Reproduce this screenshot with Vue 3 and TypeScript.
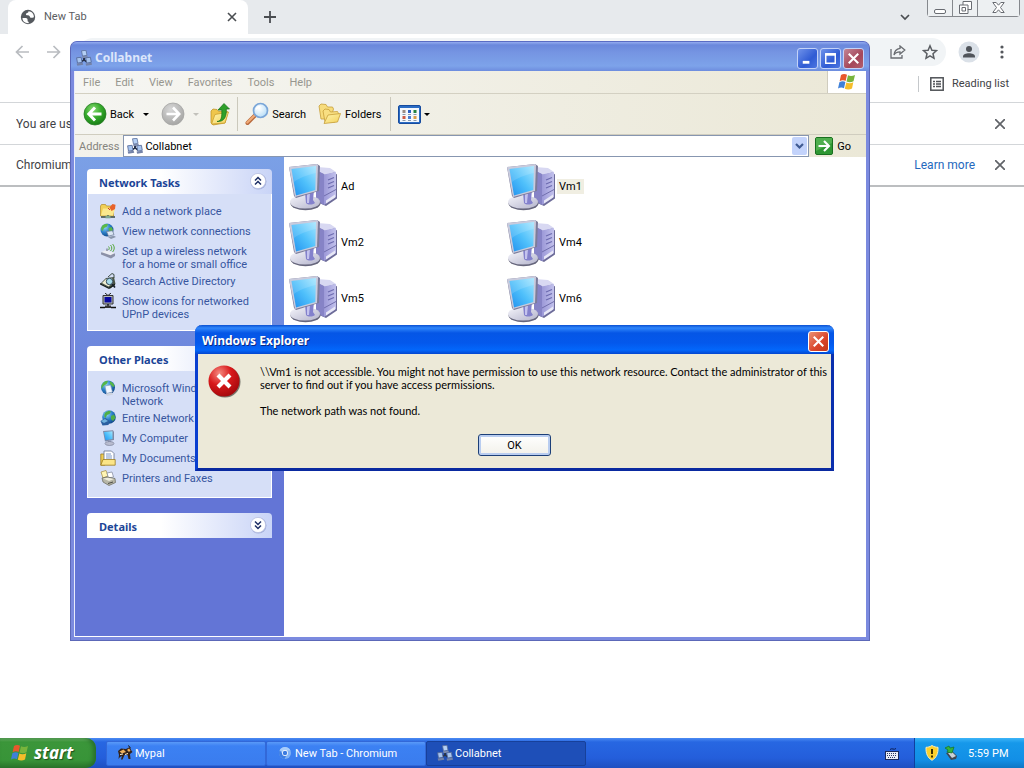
<script setup lang="ts">
interface TaskLink { label: string; icon: string }
interface Pane { title: string; open: boolean; links: TaskLink[] }

const menus: string[] = ['File', 'Edit', 'View', 'Favorites', 'Tools', 'Help']
const machines: string[] = ['Ad', 'Vm1', 'Vm2', 'Vm4', 'Vm5', 'Vm6']
const selected = 'Vm1'

const panes: Pane[] = [
  {
    title: 'Network Tasks',
    open: true,
    links: [
      { label: 'Add a network place', icon: 'addplace' },
      { label: 'View network connections', icon: 'connections' },
      { label: 'Set up a wireless network\nfor a home or small office', icon: 'wireless' },
      { label: 'Search Active Directory', icon: 'directory' },
      { label: 'Show icons for networked\nUPnP devices', icon: 'upnp' },
    ],
  },
  {
    title: 'Other Places',
    open: true,
    links: [
      { label: 'Microsoft Windows\nNetwork', icon: 'msnet' },
      { label: 'Entire Network', icon: 'globe' },
      { label: 'My Computer', icon: 'mycomputer' },
      { label: 'My Documents', icon: 'documents' },
      { label: 'Printers and Faxes', icon: 'printers' },
    ],
  },
  { title: 'Details', open: false, links: [] },
]

const tasks = [
  { label: 'Mypal', icon: 'mypal', active: false },
  { label: 'New Tab - Chromium', icon: 'chromium', active: false },
  { label: 'Collabnet', icon: 'workgroup', active: true },
]
</script>

<template>
  <div class="screen">
    <svg class="defs" aria-hidden="true">
      <defs>
        <linearGradient id="gScreen" x1="0" y1="1" x2="1" y2="0">
          <stop offset="0" stop-color="#1f8fee" /><stop offset=".5" stop-color="#4fc0fb" /><stop offset="1" stop-color="#a5e6ff" />
        </linearGradient>
        <linearGradient id="gTower" x1="0" y1="0" x2="1" y2="0">
          <stop offset="0" stop-color="#9c99d8" /><stop offset="1" stop-color="#c2c1ec" />
        </linearGradient>
        <linearGradient id="gBase" x1="0" y1="0" x2="1" y2="1">
          <stop offset="0" stop-color="#f4f4fa" /><stop offset="1" stop-color="#b4b4cc" />
        </linearGradient>
        <radialGradient id="gGreen" cx=".4" cy=".3" r=".75">
          <stop offset="0" stop-color="#8bdc76" /><stop offset=".5" stop-color="#36ab2c" /><stop offset="1" stop-color="#157a13" />
        </radialGradient>
        <radialGradient id="gGrey" cx=".4" cy=".3" r=".75">
          <stop offset="0" stop-color="#d8d8d8" /><stop offset="1" stop-color="#a3a3a1" />
        </radialGradient>
        <radialGradient id="gRed" cx=".35" cy=".25" r=".85">
          <stop offset="0" stop-color="#f58a80" /><stop offset=".45" stop-color="#d8191b" /><stop offset="1" stop-color="#9c0509" />
        </radialGradient>
        <linearGradient id="gFolder" x1="0" y1="0" x2="1" y2="1">
          <stop offset="0" stop-color="#fff5b0" /><stop offset="1" stop-color="#f3d059" />
        </linearGradient>
        <radialGradient id="gGlobe" cx=".35" cy=".3" r=".8">
          <stop offset="0" stop-color="#8fd4f7" /><stop offset=".5" stop-color="#2a7fc8" /><stop offset="1" stop-color="#0d3c7c" />
        </radialGradient>
        <radialGradient id="gLens" cx=".4" cy=".35" r=".7">
          <stop offset="0" stop-color="#ffffff" /><stop offset="1" stop-color="#b4dcf7" />
        </radialGradient>
      </defs>

      <symbol id="i-workgroup" viewBox="0 0 16 16">
        <path d="M8 6v4M8 9.500l-3 2.500M8 9.500l3 2.500" stroke="#26324a" stroke-width="2" fill="none" />
        <path d="M5.500.8l4.500-.5 1 5-4.500.8z" fill="#b5d0f5" stroke="#5b6f99" stroke-width=".8" />
        <path d="M6 6.300l5.500-.6.5 1.800-5.500.7z" fill="#7d8cb0" />
        <path d="M.6 7.800l4.500-.5 1 5-4.600.8z" fill="#a6c4ef" stroke="#506493" stroke-width=".8" />
        <path d="M.6 13.500l6-.8.7 2-6 1z" fill="#7382a8" />
        <path d="M9.700 7.800l4.700-.5.9 5-4.600.8z" fill="#a6c4ef" stroke="#506493" stroke-width=".8" />
        <path d="M9.600 13.500l6-.8.4 2-5.900 1z" fill="#7382a8" />
      </symbol>

      <symbol id="i-computer" viewBox="0 0 48 48">
        <path d="M28 5l14 1.500 6 5v24L37 43l-9-4z" fill="#6d6c98" />
        <path d="M28 4l13 1 6 4-11 3-8-4z" fill="#d8d8f2" />
        <path d="M27 7l8 4v31l-8-4z" fill="#8683c6" />
        <path d="M35 11.500l12-2.500v25l-12 8z" fill="url(#gTower)" />
        <path d="M39 17l6-2.500M39 21l6-2.500M39 25l6-2.500" stroke="#6d6bb0" stroke-width="1.300" />
        <path d="M37 37.500l9-6v3l-9 6z" fill="#e8e8f6" />
        <path d="M35 33l12-6.500" stroke="#716fae" />
        <ellipse cx="16.500" cy="40.500" rx="15" ry="6.800" fill="#66667c" />
        <ellipse cx="16" cy="39" rx="15" ry="6.600" fill="url(#gBase)" />
        <path d="M16 30l9-3-1 10 2 3c-3 2-7 2-9 0z" fill="#8381cc" />
        <path d="M18 31l3-1-1 10-2 0z" fill="#c4c3ee" />
        <path d="M0 4L28 1l3 2-1 25L7 35l-2-2z" fill="#7c7c9a" />
        <path d="M0 4L28 1l1 1-1 26L6 34z" fill="#c9cbdd" />
        <path d="M2.500 6L27 3l-.7 24L7 32.500z" fill="url(#gScreen)" />
        <path d="M2.500 6L27 3l-.2 7C18 12 10 15 5 19z" fill="#fff" opacity=".14" />
      </symbol>

      <symbol id="i-flag" viewBox="0 0 20 18">
        <path d="M4 2C6 .6 8.500.8 10 1.800L8.600 8C7 7 4.600 7 2.600 8.200z" fill="#e8582c" />
        <path d="M11 2.200c2 1.200 4.500 1 7-.2L16.500 8.200c-2.200 1.200-5 1.200-7 .2z" fill="#78b43c" />
        <path d="M2.400 9.200C4.400 8 6.800 8 8.400 9L7 15.200c-1.800-1-4-1-6 .2z" fill="#3f80d8" />
        <path d="M9.300 9.400c2 1 4.800 1 7-.2L15 15.600c-2.200 1.200-5 1.200-7.200.2z" fill="#f5bd2a" />
      </symbol>

      <symbol id="i-back" viewBox="0 0 24 24">
        <circle cx="12" cy="12" r="11" fill="url(#gGreen)" stroke="#2a7d27" stroke-width=".8" />
        <path d="M12 5.500L5.800 12l6.200 6.500M6.500 12H18.500" fill="none" stroke="#fff" stroke-width="3" />
      </symbol>
      <symbol id="i-forward" viewBox="0 0 24 24">
        <circle cx="12" cy="12" r="11" fill="url(#gGrey)" stroke="#a5a5a3" stroke-width=".8" />
        <path d="M12 5.500l6.200 6.500-6.200 6.500M17.500 12H5.500" fill="none" stroke="#fff" stroke-width="2.600" />
      </symbol>
      <symbol id="i-up" viewBox="0 0 20 24">
        <path d="M1 9l2-2 4 .5 1.500 1.800L16 9l2 1-3 11-12 2-2-2z" fill="#efc64c" stroke="#b98d20" stroke-width=".7" />
        <path d="M1.500 22L5 12.500 18.500 10 15 21z" fill="url(#gFolder)" stroke="#c79a26" stroke-width=".7" />
        <path d="M7 19.500c4.500-.5 5-4 4.800-11.500H8l6-6.500L19.500 7h-3.200c.4 8-2.300 13-9.300 12.500z" fill="#2fa02a" stroke="#16701a" stroke-width=".7" />
      </symbol>
      <symbol id="i-search" viewBox="0 0 24 24">
        <path d="M10 13.500L2.500 21" stroke="#b8693c" stroke-width="4" stroke-linecap="round" />
        <path d="M9.500 13.500L2.300 20.500" stroke="#f0ab78" stroke-width="2.200" stroke-linecap="round" />
        <circle cx="15.500" cy="8.500" r="7" fill="url(#gLens)" stroke="#7aa6d8" stroke-width="1.700" />
        <path d="M11 7.500c.8-2 2.500-3 4.500-3" stroke="#fff" stroke-width="1.500" fill="none" />
      </symbol>
      <symbol id="i-folders" viewBox="0 0 24 24">
        <path d="M1 4l2-2 5 .5L9.500 5l5 0 1 2-3 10H3z" fill="#f7dc7c" stroke="#c79e38" stroke-width=".8" />
        <path d="M5 9l2-2 4 .5L12.500 10l7-.5 1 2L17 20H7z" fill="#f8df82" stroke="#c79e38" stroke-width=".8" />
        <path d="M6 21.500L10 13l12.500-1.500L19.500 20z" fill="url(#gFolder)" stroke="#c79e38" stroke-width=".8" />
      </symbol>
      <symbol id="i-views" viewBox="0 0 23 19">
        <rect x=".5" y=".5" width="22" height="18" rx="1.500" fill="#2b6cc4" stroke="#164b9e" />
        <rect x="2" y="3" width="19" height="14" fill="#f4f8fd" />
        <path d="M4.500 5h3v3h-3z" fill="#9b8d86" /><path d="M10 5h3v3h-3z" fill="#2c5fc4" /><path d="M15.500 5h3v3h-3z" fill="#258341" />
        <path d="M4.500 11h3v3h-3z" fill="#ce5b44" /><path d="M10 11h3v3h-3z" fill="#4b7dcf" /><path d="M15.500 11h3v3h-3z" fill="#d99d46" />
        <path d="M4.500 9.500h3M10 9.500h3M15.500 9.500h3M4.500 15.500h3M10 15.500h3M15.500 15.500h3" stroke="#8899ab" />
      </symbol>
      <symbol id="i-go" viewBox="0 0 18 18">
        <rect x=".5" y=".5" width="17" height="17" rx="1.500" fill="#2f9733" stroke="#19701f" />
        <path d="M1 1h16v5L1 14z" fill="#6fc66a" opacity=".5" />
        <path d="M9 4l5 5-5 5M14 9H3.500" fill="none" stroke="#fff" stroke-width="2.100" />
      </symbol>

      <symbol id="i-addplace" viewBox="0 0 16 16">
        <path d="M.5 3l1-1.500h4l1 1.500h7V13H.5z" fill="#f0cf55" stroke="#b08a2a" stroke-width=".7" />
        <path d="M1 12.500L3 5.500h12l-2 7z" fill="#fbe88e" />
        <path d="M9.500 4.500l3-3.500 3 .8L15 6l-3.500 2z" fill="#e8622a" />
        <path d="M8 5l2 2" stroke="#c33" />
        <path d="M1 14h14M8 12v2" stroke="#3b4a3f" stroke-width="1.400" />
        <path d="M5.500 12.700h5v2.600h-5z" fill="#80a88f" />
      </symbol>
      <symbol id="i-connections" viewBox="0 0 16 16">
        <circle cx="7" cy="7" r="6.500" fill="url(#gGlobe)" />
        <path d="M2 3c2-2 5-2.500 6-1.500L6.500 4 4 5 2.500 8C1 7 1 5 2 3zM8.500 5l3-1 1.500 3-2 2.500-2-1z" fill="#5ab947" />
        <path d="M6.500 8.500l6-.8 1.500 4-5.500 1.500z" fill="#dbe6f4" stroke="#65758f" stroke-width=".7" />
        <path d="M8 14l6-1.300 2 1.300-5 2z" fill="#8995ab" />
      </symbol>
      <symbol id="i-wireless" viewBox="0 0 16 16">
        <path d="M1 9.500l5-2 9 3v2.500l-4 2.500L1 11.500z" fill="#8c91a8" />
        <path d="M1 9l5-2 9 3-4.500 2.300z" fill="#edeef5" />
        <path d="M7 8V5.500" stroke="#5f6379" />
        <path d="M8.500 3.500c1 1 1 2.500 0 3.500M10.500 2c1.700 1.700 1.700 4.500 0 6M12.500 1c2.300 2.300 2.300 5.700 0 8" fill="none" stroke="#57a83d" />
      </symbol>
      <symbol id="i-directory" viewBox="0 0 16 16">
        <path d="M.5 10.500L6 5l8-1 1.500 7-5 4.500z" fill="#4b5548" />
        <path d="M2 10l4-4 6-.8 1 4.800-4.500 3.500z" fill="#efeed2" />
        <path d="M0 10l9 4.500 6-4v1.700L9 16 0 11.500z" fill="#18201c" />
        <circle cx="9.500" cy="8.500" r="3.200" fill="#a8dceb" stroke="#33495a" />
        <path d="M12 11l3 3.500" stroke="#182028" stroke-width="1.700" />
        <path d="M8 4l4-3.500 2 1V5" fill="none" stroke="#3d4c45" />
      </symbol>
      <symbol id="i-upnp" viewBox="0 0 16 16">
        <path d="M5 0l3 2.500L11 0" fill="none" stroke="#222" />
        <path d="M3 2.500h10v8.500H3z" fill="#b8bcb8" stroke="#333" />
        <path d="M4.500 4h7v5.500h-7z" fill="#0808a0" />
        <path d="M8 11v3M0 14.500h5M11 14.500h5" stroke="#111" stroke-width="1.400" />
        <path d="M5 12.500h6v2.500H5z" fill="#333" />
      </symbol>
      <symbol id="i-msnet" viewBox="0 0 16 16">
        <circle cx="8" cy="7.500" r="7" fill="url(#gGlobe)" />
        <path d="M3 3c2-2 4-2.300 5-1.500L6.500 4 3.500 6 1.500 9C1 7 1.500 5 3 3zM10 1.200c2 .5 4 2.500 4.700 4.800L13 7l-3-3z" fill="#57b648" />
        <path d="M5 6l5.500-1 2 7-6 1.500z" fill="#f0f6ff" stroke="#8597b5" stroke-width=".6" />
        <path d="M6 13.500l6-1 1 2-6 1.500z" fill="#cdd3df" />
      </symbol>
      <symbol id="i-globe" viewBox="0 0 16 16">
        <circle cx="9" cy="7" r="6.800" fill="url(#gGlobe)" />
        <path d="M5 3c2-2 5-2.500 6-1.500L9.500 4 7 5 5.500 8C4 7 4 5 5 3zM11 6l3-1.500L15.500 8 13 11l-2-2z" fill="#4fae45" />
        <path d="M.5 11l5-3 4 3-1 4-6 .5z" fill="#2b5fa0" />
        <path d="M1 11l4-2 3 2-4 2z" fill="#6fb1dd" />
      </symbol>
      <symbol id="i-mycomputer" viewBox="0 0 16 16">
        <path d="M3 1l10-.8L14 2v8l-9 1.500z" fill="#7f8aa6" />
        <path d="M4 2l8.500-.7V9L5.500 10.300z" fill="url(#gScreen)" />
        <path d="M8 11l3-.5.5 2.500H8z" fill="#8a93b5" />
        <ellipse cx="9.500" cy="13.500" rx="4.500" ry="2" fill="#b9bdd0" stroke="#747a92" stroke-width=".6" />
      </symbol>
      <symbol id="i-documents" viewBox="0 0 16 16">
        <path d="M.8 4h4v11.200h-4z" fill="#f0cd52" stroke="#9c7b20" stroke-width=".8" />
        <path d="M4 1h7.500L14 3.500V12H4z" fill="#fff" stroke="#65728e" stroke-width=".8" />
        <path d="M6 4h5M6 6h6M6 8h6" stroke="#7e99c7" />
        <path d="M.8 15.200L3 9.500h12.200V15.200z" fill="#fbe588" stroke="#9c7b20" stroke-width=".8" />
      </symbol>
      <symbol id="i-printers" viewBox="0 0 16 16">
        <path d="M1 2l5-1.500L8 6 3 8z" fill="#fff5b4" stroke="#a08a42" stroke-width=".7" />
        <path d="M7 3l5-1 1.500 5-5 1z" fill="#fff" stroke="#7c8498" stroke-width=".7" />
        <path d="M2 8l5-1 8 1.500.5 4L9 15.500 3 12z" fill="#b7b6a7" stroke="#666559" stroke-width=".7" />
        <path d="M3 8.500l5-.7 6 1.200-5 2z" fill="#eeeddd" />
        <path d="M8 13.500l5-1.500" stroke="#4b4b44" />
      </symbol>
      <symbol id="i-mypal" viewBox="0 0 16 16">
        <path d="M1 6l3-2.500 5 .5 4-2 1 3 1.500 2-2.500 2 .5 5h-2l-1-4-3 0-2 4.500H4L5 11l-2 1-1.500 2L2 10z" fill="#33221a" />
        <path d="M2.500 6.500l4-2L9 7 5 8.500zM10 5l2-1.500 1.500 2L12 7z" fill="#eeb15c" />
        <path d="M3 9.500l3-.5M8 9.500l3-1" stroke="#fff0d0" />
        <path d="M11 .5l2.500 2" stroke="#222" />
      </symbol>
      <symbol id="i-chromium" viewBox="0 0 16 16">
        <circle cx="8" cy="8" r="6" fill="#81b3f5" />
        <path d="M8 2a6 6 0 0 1 5.500 3.500H8L4 6 2.500 5.500A6 6 0 0 1 8 2z" fill="#a8cdfb" />
        <path d="M2.700 5.300A6 6 0 0 0 7.500 14L9.500 10 5.500 9z" fill="#3f7fe3" />
        <circle cx="8" cy="8" r="2.900" fill="#fff" /><circle cx="8" cy="8" r="2.200" fill="#3b7be0" />
      </symbol>
    </svg>

    <main class="desktop">
      <section class="browser" aria-label="Chromium">
        <div class="tabstrip">
          <div class="tab">
            <svg class="fav" viewBox="0 0 16 16"><circle cx="8" cy="8" r="7.200" fill="#55595e" /><path d="M2.500 9h3.200c1.300 0 1.900.8 1.900 1.900v1.300c1.500.5 1.200 1.300 1 2-3.500.2-6.300-2.200-6.100-5.200zM8.500 2.200c0 1.600-1.300 1.700-2.200 2.200-.7.400-.4 1.700.6 1.800 1.500.1 2.700 0 3 1.500.2 1 1.300 1.300 2.500 1.100l1.500-.5c.3-3.300-2.300-6-5.400-6.100z" fill="#fff" /></svg>
            <span class="tabname">New Tab</span>
            <button class="plain x" aria-label="Close tab"><svg viewBox="0 0 10 10" width="10" height="10"><path d="M1 1l8 8M9 1L1 9" stroke="#4a4d51" stroke-width="1.600" /></svg></button>
          </div>
          <button class="plain newtab" aria-label="New tab"><svg viewBox="0 0 12 12" width="12" height="12"><path d="M6 0v12M0 6h12" stroke="#4a4d51" stroke-width="1.800" /></svg></button>
          <span class="grow"></span>
          <button class="plain tabsearch" aria-label="Search tabs"><svg viewBox="0 0 10 7" width="10" height="7"><path d="M1 1l4 4 4-4" fill="none" stroke="#4a4d51" stroke-width="1.700" /></svg></button>
          <div class="frame-buttons">
            <button aria-label="Minimize"><svg viewBox="0 0 12 5" width="12" height="5"><rect x=".5" y=".5" width="11" height="4" rx="1.500" fill="#fff" stroke="#696c72" /></svg></button>
            <button aria-label="Restore"><svg viewBox="0 0 13 13" width="13" height="13"><path d="M4 .5h8.500v8H9v4H.5V4H4z" fill="#fff" stroke="#696c72" /><path d="M4 4h5v5M3 6.500h3.500V10H3z" fill="none" stroke="#696c72" /></svg></button>
            <button class="wide" aria-label="Close"><svg viewBox="0 0 13 11" width="13" height="11"><path d="M.8.500h3.400l2.300 2.700L8.800.5h3.400L8.500 5.500l3.700 5H8.800L6.500 7.800 4.200 10.500H.8l3.700-5z" fill="#fff" stroke="#696c72" /></svg></button>
          </div>
        </div>
        <div class="toolbar">
          <button class="plain nav" aria-label="Back"><svg viewBox="0 0 14 14" width="14" height="14"><path d="M7.500 1L1.500 7l6 6M1.500 7H14" fill="none" stroke="#b9bcc0" stroke-width="1.700" /></svg></button>
          <button class="plain nav" aria-label="Forward"><svg viewBox="0 0 14 14" width="14" height="14"><path d="M6.500 1l6 6-6 6M12.500 7H0" fill="none" stroke="#b9bcc0" stroke-width="1.700" /></svg></button>
          <div class="omnibox">
            <button class="plain" aria-label="Share"><svg viewBox="0 0 16 14" width="16" height="14"><path d="M1 4v9h11v-3" fill="none" stroke="#696c71" stroke-width="1.300" /><path d="M10 1l4.800 4L10 9V6.800C7 6.800 5 7.800 4 10c.3-3.500 2.300-6 6-6.600z" fill="none" stroke="#696c71" stroke-width="1.300" /></svg></button>
            <button class="plain" aria-label="Bookmark"><svg viewBox="0 0 16 16" width="16" height="16"><path d="M8 1.800l1.900 4.400 4.600.4-3.500 3.100 1 4.600L8 11.900l-4 2.400 1-4.600L1.500 6.600l4.600-.4z" fill="none" stroke="#5b5e63" stroke-width="1.500" /></svg></button>
          </div>
          <button class="plain avatar" aria-label="Profile"><svg viewBox="0 0 22 22" width="22" height="22"><circle cx="11" cy="11" r="10.500" fill="#dbe1e8" /><circle cx="11" cy="8" r="3" fill="#50545a" /><path d="M5 16.500v-1c0-2 3-3.200 6-3.200s6 1.200 6 3.200v1z" fill="#50545a" /></svg></button>
          <button class="plain more" aria-label="Menu"><svg viewBox="0 0 4 14" width="4" height="14"><circle cx="2" cy="2" r="1.600" fill="#54575c" /><circle cx="2" cy="7" r="1.600" fill="#54575c" /><circle cx="2" cy="12" r="1.600" fill="#54575c" /></svg></button>
        </div>
        <div class="bookmarks">
          <button class="plain reading"><svg viewBox="0 0 14 14" width="14" height="14"><rect x=".8" y=".8" width="12.400" height="12.400" fill="none" stroke="#4f5257" stroke-width="1.500" /><path d="M3 4.500h2M6 4.500h5M3 7h2M6 7h5M3 9.500h2M6 9.500h5" stroke="#4f5257" stroke-width="1.300" /></svg><span>Reading list</span></button>
        </div>
        <div class="infobar"><span>You are using</span><button class="plain x" aria-label="Dismiss"><svg viewBox="0 0 10 10" width="10" height="10"><path d="M0 0l10 10M10 0L0 10" stroke="#606368" stroke-width="1.700" /></svg></button></div>
        <div class="infobar last"><span>Chromium</span><a href="#">Learn more</a><button class="plain x" aria-label="Dismiss"><svg viewBox="0 0 10 10" width="10" height="10"><path d="M0 0l10 10M10 0L0 10" stroke="#606368" stroke-width="1.700" /></svg></button></div>
      </section>

      <section class="explorer" aria-label="Collabnet">
        <header class="titlebar">
          <svg class="i16"><use href="#i-workgroup" /></svg>
          <h1>Collabnet</h1>
          <button class="cap" aria-label="Minimize"><svg viewBox="0 0 20 20"><path d="M5 14h7" stroke="#fff" stroke-width="3" /></svg></button>
          <button class="cap" aria-label="Maximize"><svg viewBox="0 0 20 20"><path d="M5 5.500h10v9.500H5zM5 6h10" fill="none" stroke="#fff" stroke-width="1.500" /><path d="M4.300 5.500h11.400" stroke="#fff" stroke-width="2.500" /></svg></button>
          <button class="cap close" aria-label="Close"><svg viewBox="0 0 20 20"><path d="M5 5l10 10M15 5L5 15" stroke="#fff" stroke-width="2.200" /></svg></button>
        </header>
        <div class="client">
          <nav class="menubar">
            <button v-for="m in menus" :key="m" class="plain">{{ m }}</button>
            <span class="flagbox"><svg width="20" height="18"><use href="#i-flag" /></svg></span>
          </nav>
          <div class="tools">
            <button class="plain"><svg width="24" height="24"><use href="#i-back" /></svg><span>Back</span></button>
            <i class="arrow"></i>
            <button class="plain fwd" aria-label="Forward"><svg width="24" height="24"><use href="#i-forward" /></svg></button>
            <i class="arrow off"></i>
            <button class="plain up" aria-label="Up"><svg width="20" height="24"><use href="#i-up" /></svg></button>
            <i class="rule"></i>
            <button class="plain"><svg width="24" height="24"><use href="#i-search" /></svg><span>Search</span></button>
            <button class="plain fold"><svg width="24" height="24"><use href="#i-folders" /></svg><span>Folders</span></button>
            <i class="rule r2"></i>
            <button class="plain" aria-label="Views"><svg width="23" height="19"><use href="#i-views" /></svg></button>
            <i class="arrow tight"></i>
          </div>
          <div class="address">
            <label for="addr">Address</label>
            <div class="field">
              <svg class="i16"><use href="#i-workgroup" /></svg>
              <input id="addr" type="text" value="Collabnet" />
              <button class="drop" aria-label="Show addresses"><svg viewBox="0 0 9 7" width="9" height="7"><path d="M1 1l3.500 3.500L8 1" fill="none" stroke="#3f5a92" stroke-width="2.200" /></svg></button>
            </div>
            <button class="plain go"><svg width="18" height="18"><use href="#i-go" /></svg><span>Go</span></button>
          </div>
          <div class="content">
            <aside class="side">
              <section v-for="p in panes" :key="p.title" class="pane">
                <header>
                  <h2>{{ p.title }}</h2>
                  <button class="plain round" :aria-label="p.open ? 'Collapse' : 'Expand'">
                    <svg viewBox="0 0 18 18" width="18" height="18">
                      <circle cx="9.500" cy="9.500" r="8" fill="#8b97c9" opacity=".6" />
                      <circle cx="9" cy="9" r="7.600" fill="#fff" stroke="#b7bfdf" stroke-width=".7" />
                      <path v-if="p.open" d="M6 8.500l3-3 3 3M6 12.500l3-3 3 3" fill="none" stroke="#1d2e66" stroke-width="1.500" />
                      <path v-else d="M6 5.500l3 3 3-3M6 9.500l3 3 3-3" fill="none" stroke="#1d2e66" stroke-width="1.500" />
                    </svg>
                  </button>
                </header>
                <ul v-if="p.open">
                  <li v-for="l in p.links" :key="l.label"><svg class="i16"><use :href="'#i-' + l.icon" /></svg><a href="#">{{ l.label }}</a></li>
                </ul>
              </section>
            </aside>
            <div class="files">
              <button v-for="m in machines" :key="m" class="plain file"><svg width="48" height="48"><use href="#i-computer" /></svg><span :class="{ picked: m === selected }">{{ m }}</span></button>
            </div>
          </div>
        </div>
      </section>

      <section class="dialog" role="alertdialog" aria-labelledby="dlg-title">
        <header>
          <h1 id="dlg-title">Windows Explorer</h1>
          <button class="cap close live" aria-label="Close"><svg viewBox="0 0 20 20"><path d="M5 5l10 10M15 5L5 15" stroke="#fff" stroke-width="2.200" /></svg></button>
        </header>
        <div class="dialog-body">
          <div class="message">
            <svg viewBox="0 0 33 33" width="33" height="33"><circle cx="17" cy="17" r="15.500" fill="#77766c" /><circle cx="16" cy="16" r="15.500" fill="url(#gRed)" /><path d="M10 10l12 12M22 10L10 22" stroke="#fff" stroke-width="4.200" /></svg>
            <div>
              <p>\\Vm1 is not accessible. You might not have permission to use this network resource. Contact the administrator of this server to find out if you have access permissions.</p>
              <p>The network path was not found.</p>
            </div>
          </div>
          <button class="ok">OK</button>
        </div>
      </section>
    </main>

    <footer class="taskbar">
      <button class="start"><svg width="20" height="18"><use href="#i-flag" /></svg><span>start</span></button>
      <div class="tasks">
        <button v-for="t in tasks" :key="t.label" :class="{ active: t.active }"><svg class="i16"><use :href="'#i-' + t.icon" /></svg><span>{{ t.label }}</span></button>
      </div>
      <svg class="kbd" viewBox="0 0 14 13" width="14" height="13"><path d="M5 2.500c2-2 4 1 6-1" fill="none" stroke="#0d1f55" /><rect x=".5" y="4.500" width="13" height="8" fill="#e9edf7" stroke="#1a2a5c" /><path d="M2 6.500h10M2 8.500h10M3 10.500h8" stroke="#2c3a66" stroke-dasharray="1 1" /></svg>
      <div class="tray">
        <svg viewBox="0 0 14 16" width="14" height="16"><path d="M7 .5c2 1.300 4 1.800 6 1.800.3 6-1.500 10.500-6 13-4.500-2.500-6.300-7-6-13 2 0 4-.5 6-1.800z" fill="#fbd02b" stroke="#f7edbb" /><path d="M7 4v5M7 10.500v2" stroke="#3d3000" stroke-width="2" /></svg>
        <svg viewBox="0 0 14 16" width="14" height="16"><path d="M2 8l6-2 5 5-1 3-5 1z" fill="#3f4652" /><path d="M4 8l4-1 4 4-4 2z" fill="#c9d2d8" /><path d="M1 3l4-2 1 2 4-1-2 6-5-1 1-2z" fill="#35b33d" stroke="#14702a" stroke-width=".7" /></svg>
        <time>5:59 PM</time>
      </div>
    </footer>
  </div>
</template>

<style>
html, body { margin: 0; }
</style>

<style scoped>
.screen { display: flex; flex-direction: column; min-height: 100vh; overflow: hidden; font-family: Roboto, "Noto Sans", sans-serif; font-size: 11px; line-height: 13px; color: #000; background: #fff; }
.defs { position: absolute; width: 0; height: 0; }
* { box-sizing: border-box; }
h1, h2, p, ul { margin: 0; padding: 0; }
h1, h2 { font-family: "Noto Sans", sans-serif; }
ul { list-style: none; }
button, input { font: inherit; color: inherit; }
svg { flex: none; display: block; }
.plain { border: 0; padding: 0; background: none; display: flex; align-items: center; }
.i16 { width: 16px; height: 16px; }
.grow { flex: 1; }
.desktop { position: relative; flex: 1; display: flex; flex-direction: column; }

.browser { flex: 1; color: #3f4246; font-size: 12px; line-height: 16px; }
.tabstrip { display: flex; height: 34px; background: #e7eaed; padding: 0 4px 0 8px; }
.tab { display: flex; align-items: center; width: 240px; padding: 0 11px 0 12px; background: #fff; border-radius: 8px 8px 0 0; }
.fav { width: 16px; height: 16px; }
.tabname { flex: 1; margin-left: 8px; font-size: 11px; color: #5a5d61; }
.newtab { margin-left: 16px; }
.tabsearch { margin-right: 17px; }
.frame-buttons { display: flex; height: 17px; border: 1px solid #85888d; border-top: 0; border-radius: 0 0 4px 4px; }
.frame-buttons button { width: 25px; border: 0; border-right: 1px solid #85888d; padding: 0 0 2px; background: #edf0f2; display: flex; align-items: flex-end; justify-content: center; }
.frame-buttons .wide { width: 41px; border-right: 0; align-items: center; }
.toolbar { display: flex; align-items: center; height: 36px; padding: 0 20px 0 15px; }
.nav { margin-right: 18px; }
.omnibox { flex: 1; display: flex; justify-content: flex-end; gap: 16px; height: 28px; padding-right: 8px; border-radius: 14px; background: #f1f4f6; }
.avatar { margin: 0 20px 0 12px; }
.bookmarks { display: flex; justify-content: flex-end; align-items: center; height: 33px; padding: 0 15px 4px; border-bottom: 1px solid #d3d6d9; }
.reading { height: 16px; gap: 8px; padding-left: 11px; border-left: 1px solid #c5c8cb; font-size: 11px; }
.infobar { display: flex; align-items: center; height: 42px; padding: 0 19px 0 16px; border-bottom: 1px solid #d3d6d9; white-space: nowrap; }
.infobar span { flex: 1; min-width: 0; overflow: hidden; }
.infobar.last { border-bottom: 2px solid #bcbec0; }
.infobar a { margin-right: 20px; color: #2468bd; text-decoration: none; }

.explorer { position: absolute; top: 41px; right: 154px; bottom: 97px; left: 70px; display: flex; flex-direction: column; padding: 0 3px 3px; border: 1px solid #5c68b8; border-top-color: #5a6cc4; border-radius: 7px 7px 0 0; background: #7b8adf; }
.titlebar { display: flex; align-items: center; gap: 2px; height: 29px; margin: 0 -3px; padding: 3px 5px 0 5px; border-radius: 6px 6px 0 0; background: linear-gradient(#93abf0 0, #6a88dc 3px, #7594e2 10px, #7da3ea 24px, #6d8cde); color: #dce6fb; }
.titlebar h1 { flex: 1; margin-left: 1px; font-size: 12px; line-height: 16px; }
.cap { width: 21px; height: 21px; border: 1px solid #c3d2f8; border-radius: 3px; padding: 0; background: linear-gradient(135deg, #6f92ea, #2f5bd4 60%, #4d76e0); }
.cap svg { width: 19px; height: 19px; }
.cap.close { background: linear-gradient(135deg, #c28595, #a5475a 60%, #b25e6c); }
.cap.close.live { border-color: #fff; background: linear-gradient(135deg, #eb9174, #d9442a 60%, #c2391c); }
.client { flex: 1; display: flex; flex-direction: column; border-left: 1px solid #e8ebfa; border-bottom: 1px solid #fff; background: #ece9d8; }
.menubar { display: flex; align-items: stretch; height: 23px; padding-left: 8px; gap: 15px; border-bottom: 1px solid #d3d0c2; background: linear-gradient(90deg, #f6f6f3, #ebe8d7); color: #97968f; }
.flagbox { display: flex; justify-content: center; align-items: center; width: 39px; margin-left: auto; border-left: 1px solid #cfccbe; background: #fff; }
.tools { display: flex; align-items: center; height: 41px; padding-left: 8px; border-bottom: 1px solid #d0cdbf; background: linear-gradient(90deg, #f5f5f1, #ebe8d7); }
.tools button { gap: 3px; }
.arrow { margin: 0 12px 0 9px; border: 3px solid transparent; border-top-color: #000; border-bottom: 0; }
.arrow.off { margin: 0 11px 0 8px; border-top-color: #c2c1bb; }
.arrow.tight { margin-left: 3px; }
.rule { width: 1px; height: 34px; margin: 0 7px; background: #cbc9bc; }
.rule.r2 { margin: 0 7px 0 9px; }
.fold { margin-left: 12px; }
.address { display: flex; align-items: center; height: 22px; padding-left: 4px; background: linear-gradient(90deg, #f3f2ec, #ebe8d7); color: #85847d; }
.field { flex: 1; display: flex; align-items: center; height: 22px; margin-left: 4px; padding: 1px 1px 1px 3px; border: 1px solid #8796b0; background: #fff; color: #000; }
.field input { flex: 1; min-width: 0; border: 0; padding: 0 0 0 2px; background: none; outline: 0; }
.drop { width: 15px; height: 18px; border: 0; border-radius: 2px; padding: 0 0 0 3px; background: #c3d3fb; }
.go { gap: 4px; margin: 0 15px 0 6px; color: #000; }
.content { flex: 1; display: flex; background: #fff; }
.side { width: 209px; padding: 12px; background: linear-gradient(#7ba0e6, #6375d6 70%); display: flex; flex-direction: column; gap: 15px; }
.pane header { display: flex; align-items: center; justify-content: space-between; height: 25px; padding: 0 5px 2px 12px; border-radius: 4px 4px 0 0; background: linear-gradient(90deg, #fff 40%, #c9d4f7); }
.pane h2 { padding-top: 3px; font-size: 11px; line-height: 13px; color: #1c4597; }
.pane ul { display: flex; flex-direction: column; gap: 4px; padding: 9px 4px 11px 12px; border: 1px solid #fff; border-top: 0; background: #d6dff7; }
.pane li { display: flex; gap: 6px; min-height: 16px; max-height: 26px; }
.pane a { padding-top: 2px; white-space: pre; color: #37569f; text-decoration: none; }
.files { flex: 1; display: grid; grid-template-columns: repeat(auto-fill, 218px); align-content: start; gap: 8px 0; padding: 6px 5px; overflow: hidden; }
@media (max-width: 1200px) { .files { grid-template-columns: 218px 218px; } }
.file { gap: 2px; }
.file span { margin-bottom: 2px; padding: 1px 2px; }
.file .picked { background: #f0eee2; }

.dialog { position: absolute; top: 325px; right: 190px; left: 195px; border: 3px solid #0a3fd0; border-top: 0; border-right-color: #0a2fae; border-bottom-color: #0a2aa0; border-radius: 7px 7px 0 0; background: #ece9d8; }
.dialog header { display: flex; align-items: center; height: 29px; margin: 0 -3px; padding: 3px 5px 0 7px; border-radius: 7px 7px 0 0; background: linear-gradient(#0a50d2 0, #2f86fb 3px, #0556e6 8px, #0458ec 18px, #0367fb 25px, #0346cf); color: #fff; }
.dialog h1 { flex: 1; font-size: 12px; line-height: 16px; text-shadow: 1px 1px #0a2a86; }
.dialog-body { display: flex; flex-direction: column; align-items: center; padding: 11px 0 12px; }
.message { align-self: stretch; display: flex; gap: 19px; padding: 0 2px 0 10px; font-family: Lato, sans-serif; }
.message p { margin-bottom: 13px; }
.ok { width: 73px; height: 22px; margin-top: 4px; border: 1px solid #1c3f78; border-radius: 3px; padding: 0; background: linear-gradient(#fff, #f2f1ea); box-shadow: inset 0 0 0 2px #b9cdf0; }

.taskbar { position: relative; display: flex; align-items: center; height: 30px; background: linear-gradient(#4b8bf3 0, #2767e2 4px, #245edb 20px, #1f4fc0); color: #fff; }
.start { display: flex; align-items: center; gap: 4px; width: 96px; height: 30px; border: 0; border-radius: 0 10px 10px 0; padding: 0 0 0 10px; background: linear-gradient(#6fb76c 0, #3b963a 4px, #389438 22px, #2a752b); box-shadow: inset -3px 0 4px #286f2b; }
.start span { font-family: "Noto Sans", sans-serif; font-size: 17px; line-height: 20px; font-weight: 700; font-style: italic; text-shadow: 1px 1px 1px #1c4d1c; }
.tasks { flex: 1; display: flex; margin-left: 10px; }
.tasks button { display: flex; align-items: center; gap: 2px; flex: 0 1 160px; height: 25px; border: 1px solid #3268d8; border-radius: 2px; padding: 0 10px; background: linear-gradient(#5a9af8, #3c81f3 4px, #3a7cee); }
.tasks .active { border-color: #17409a; background: #1e4fb8; }
.kbd { margin-right: 15px; }
.tray { display: flex; align-items: center; gap: 5px; width: 110px; height: 30px; padding-left: 10px; border-left: 1px solid #103f9e; background: linear-gradient(#3cb4f8 0, #1698ea 5px, #128fe6 22px, #0e76c4); }
.tray time { margin-left: 5px; }
</style>
